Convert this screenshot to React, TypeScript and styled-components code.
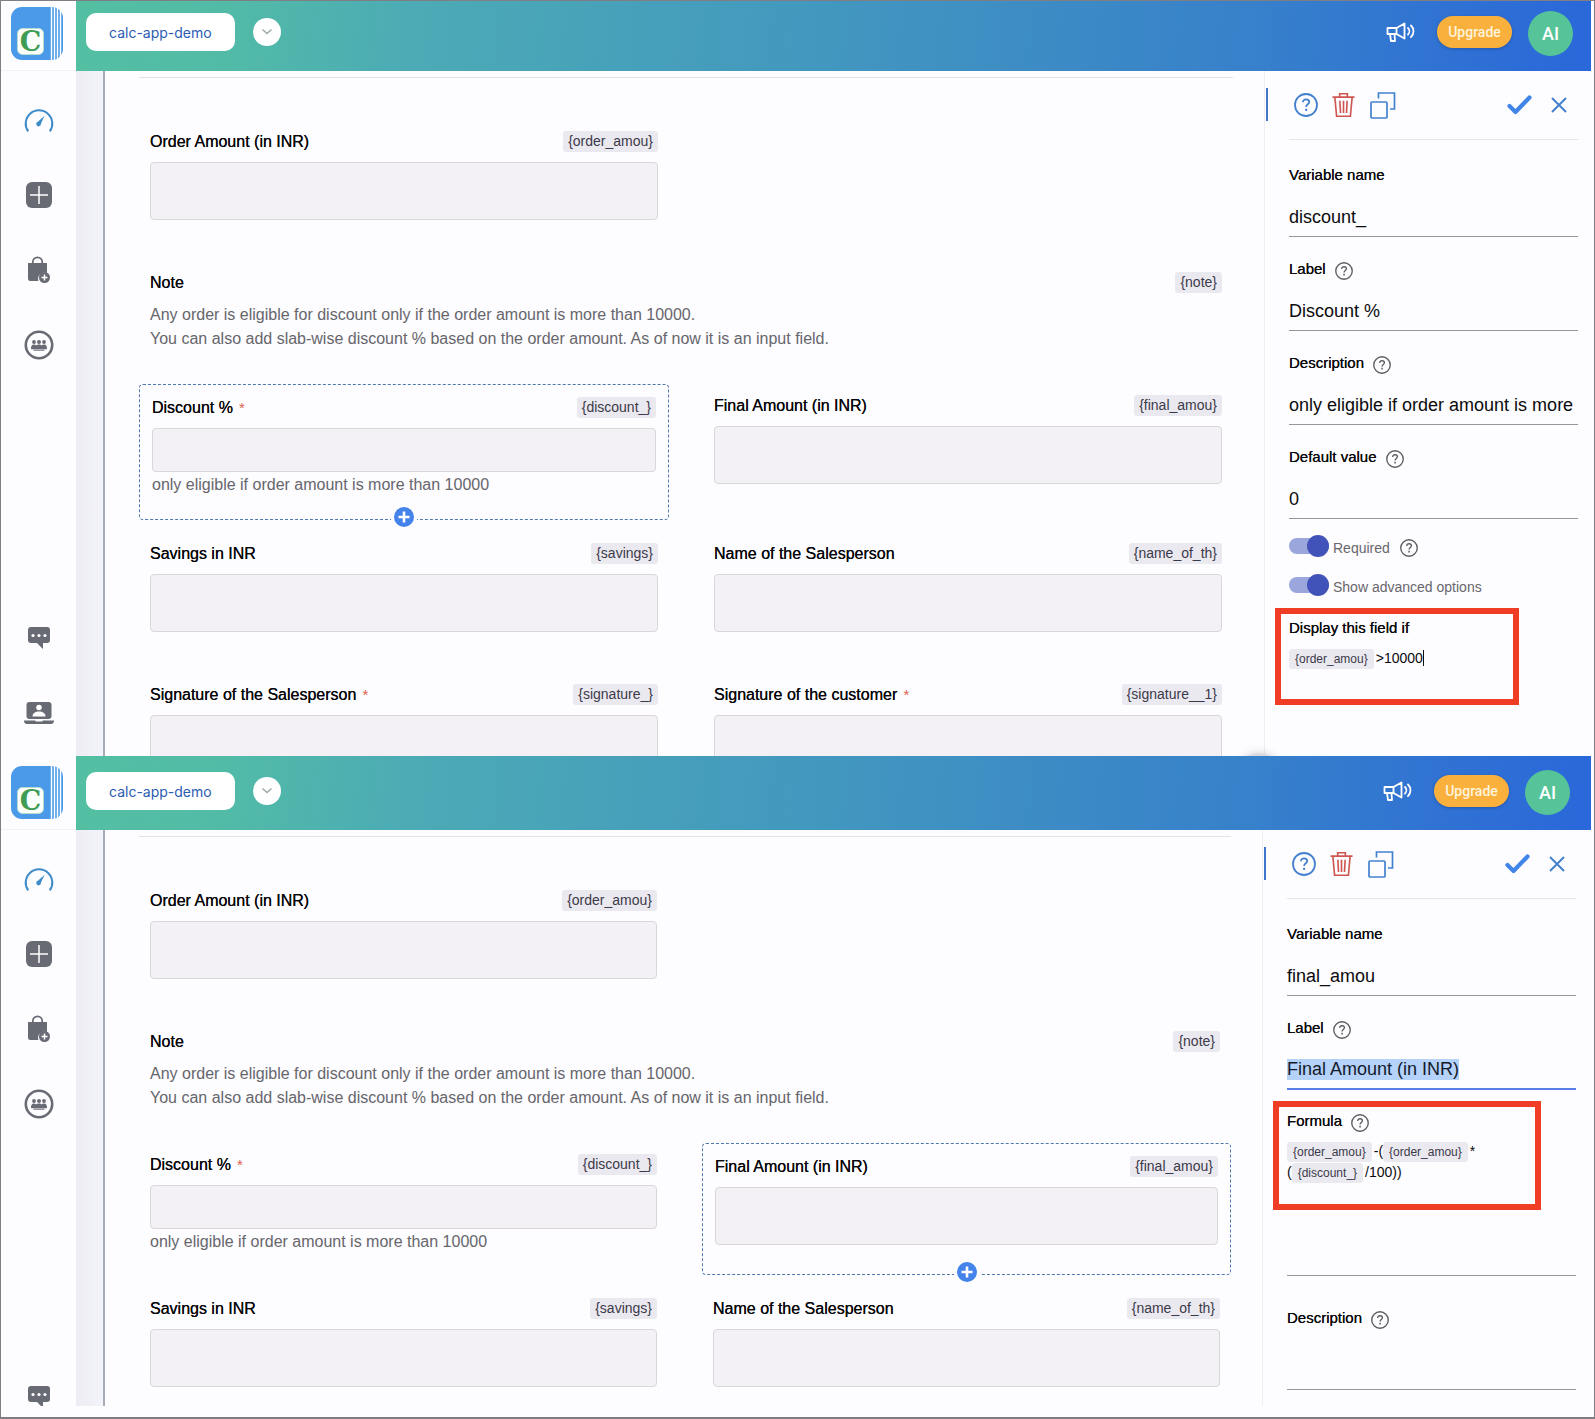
import React, { useEffect, useId, useRef } from "react";
import styled, { createGlobalStyle, css } from "styled-components";

const GlobalStyle = createGlobalStyle`
  *, *::before, *::after { box-sizing: border-box; }
  body {
    margin: 0;
    background: #fdfcfe;
    color: #0b0b0d;
    font-family: "Liberation Sans", Arial, sans-serif;
  }
  button, input, textarea { font: inherit; color: inherit; }
  button { border: 0; padding: 0; background: none; cursor: pointer; }
`;

/* ---------- page ---------- */

const Page = styled.div`
  display: flex;
  flex-direction: column;
  height: 100vh;
  padding: 0 3px 11px 0;
  border: 1px solid #807d83;
  border-bottom-width: 2px;
`;

const Frame = styled.section<{ $share: number }>`
  flex: ${(p) => p.$share} 1 0;
  min-height: 0;
  overflow: hidden;
  position: relative;
  display: grid;
  grid-template-columns: 75px minmax(0, 1fr);
  grid-template-rows: auto minmax(0, 1fr);
`;

/* ---------- side bar ---------- */

const LogoSlot = styled.div`
  display: flex;
  justify-content: center;
  align-items: flex-end;
  padding: 0 4px 10px 0;
  border-bottom: 1px solid #f4f1f6;
`;

const Sidebar = styled.nav`
  display: flex;
  flex-direction: column;
  padding: 11px 0 0;
  overflow: hidden;
`;

const SideButton = styled.button<{ $active?: boolean }>`
  flex: none;
  display: grid;
  place-items: center;
  height: 75px;
  color: ${(p) => (p.$active ? "#3d8bc9" : "#686a74")};
`;

const SideGap = styled.div`
  flex: none;
  height: 218px;
`;

/* ---------- top bar ---------- */

const Header = styled.header<{ $height: number; $inset: number }>`
  display: flex;
  align-items: flex-end;
  height: ${(p) => p.$height}px;
  padding: 0 ${(p) => p.$inset}px 0 10px;
  background: linear-gradient(
    95deg,
    #53bfa2 0%,
    #52bba7 10%,
    #4cabb5 22%,
    #4297bf 50%,
    #3780cb 78%,
    #2a67da 100%
  );
`;

const AppName = styled.button`
  height: 38px;
  margin-bottom: 20px;
  padding: 0 23px;
  border-radius: 10px;
  background: #fff;
  color: #2b5cb3;
  font-family: Inter, sans-serif;
  font-size: 14px;
`;

const RoundButton = styled.button`
  display: grid;
  place-items: center;
  width: 28px;
  height: 28px;
  margin: 0 auto 25px 18px;
  border-radius: 50%;
  background: #fff;
  color: #9aa9a8;
`;

const NewsButton = styled.button`
  height: 20px;
  margin: 0 22px 29px 0;
  color: #fff;
`;

const Upgrade = styled.button`
  width: 75px;
  height: 32px;
  margin: 0 16px 23px 0;
  border-radius: 16px;
  background: #fab03d;
  box-shadow: 0 1px 3px rgba(20, 40, 90, 0.35);
  color: #fff4dc;
  font-family: Roboto, sans-serif;
  font-size: 14px;
  font-weight: 500;
`;

const Avatar = styled.button`
  width: 45px;
  height: 45px;
  margin-bottom: 15px;
  border-radius: 50%;
  background: #56c498;
  color: #fff;
  font-family: Roboto, sans-serif;
  font-size: 18px;
  font-weight: 500;
`;

/* ---------- form canvas ---------- */

const Body = styled.div`
  display: grid;
  grid-template-columns: 29px minmax(0, 1fr) auto;
  min-height: 0;
`;

const Gutter = styled.div`
  border-right: 2px solid #a6abb8;
  background: linear-gradient(90deg, #ededf3, #f3f4f9);
`;

const Canvas = styled.main`
  padding: 6px 31px 0 34px;
  overflow: hidden;
`;

const FormGrid = styled.div`
  display: grid;
  grid-template-columns: 1fr 1fr;
  gap: 12px 34px;
  padding-top: 42px;
  border-top: 1px solid #e4e1e7;
`;

const Cell = styled.div<{ $selected?: boolean; $compact?: boolean; $wide?: boolean }>`
  position: relative;
  border: 1px dashed transparent;
  border-radius: 4px;
  padding: 10px 10px ${(p) => (p.$compact ? 20 : 28)}px;
  ${(p) => p.$wide && css`grid-column: 1 / -1;`}
  ${(p) =>
    p.$selected &&
    css`
      border-color: #4f79ad;
      padding: 12px 12px ${p.$compact ? 22 : 28}px;
    `}
`;

const CellHead = styled.div`
  display: flex;
  justify-content: space-between;
  align-items: center;
  height: 21px;
  margin-bottom: 10px;
`;

const CellLabel = styled.label`
  font-size: 16px;
  line-height: 21px;
  color: #08080a;
  text-shadow: 0 0 0 #08080a;
`;

const Star = styled.span`
  margin-left: 2px;
  color: #dc5f4d;
  font-size: 15px;
  text-shadow: none;
`;

const Tag = styled.code`
  padding: 0 5px;
  border-radius: 3px;
  background: #ebe9f0;
  color: #3b3a4a;
  font-family: "Liberation Sans", Arial, sans-serif;
  font-size: 14px;
  line-height: 21px;
`;

const CellInput = styled.input<{ $short?: boolean }>`
  display: block;
  width: 100%;
  height: ${(p) => (p.$short ? 44 : 58)}px;
  border: 1px solid #d9d7dc;
  border-radius: 4px;
  background: #f4f1f6;
`;

const CellText = styled.p`
  margin: 0;
  color: #66666c;
  font-size: 16px;
  line-height: 24px;
`;

const Hint = styled(CellText)`
  margin-top: 1px;
`;

const AddButton = styled.button`
  position: absolute;
  left: 50%;
  bottom: -8px;
  display: grid;
  place-items: center;
  width: 26px;
  height: 20px;
  margin-left: -13px;
  background: #fdfcfe;
`;

const FloatingButton = styled.button`
  position: absolute;
  right: 312px;
  bottom: -37px;
  width: 40px;
  height: 40px;
  border-radius: 50%;
  background: #dcdade;
  box-shadow: 0 0 8px rgba(90, 70, 90, 0.25);
`;

/* ---------- settings panel ---------- */

const Panel = styled.aside<{ $inset: number }>`
  position: relative;
  width: ${(p) => 314 + p.$inset}px;
  padding: 0 ${(p) => p.$inset}px 0 24px;
  border-left: 1px solid #f0edf3;
`;

const Handle = styled.div`
  position: absolute;
  left: 1px;
  top: 17px;
  width: 2px;
  height: 33px;
  background: #3f76c8;
`;

const Toolbar = styled.div`
  display: flex;
  align-items: center;
  height: 69px;
  padding: 0 11px 0 5px;
  border-bottom: 1px solid #e6e3e9;
  color: #4381cf;
`;

const ToolButton = styled.button<{ $danger?: boolean; $push?: boolean }>`
  display: grid;
  margin-right: 14px;
  color: ${(p) => (p.$danger ? "#cf5650" : "inherit")};
  ${(p) => p.$push && css`margin-left: auto; margin-right: 19px;`}
  &:last-child { margin-right: 0; }
`;

const PanelBody = styled.div`
  padding-top: 3px;
`;

const Group = styled.div<{ $spaced?: boolean }>`
  padding-top: ${(p) => (p.$spaced ? 32 : 22)}px;
`;

const LabelRow = styled.div`
  display: flex;
  align-items: center;
  gap: 9px;
  height: 20px;
  margin-bottom: 10px;
`;

const labelText = css`
  color: #0b0b0d;
  font-size: 15px;
  line-height: 20px;
  text-shadow: 0 0 0 #0b0b0d;
`;

const PanelLabel = styled.label`
  ${labelText}
`;

const EditorLabel = styled.span`
  ${labelText}
`;

const HelpButton = styled.button`
  display: grid;
  margin-top: 4px;
  color: #5c5c62;
`;

const underline = css`
  display: block;
  width: 100%;
  padding: 3px 0 0;
  border: 0;
  border-bottom: 1px solid #97959b;
  border-radius: 0;
  outline: 0;
  background: none;
  font-size: 18px;
`;

const LineInput = styled.input`
  ${underline}
  height: 42px;
  &::selection { background: #b5d2fb; color: #141a2a; }
  &:focus { border-bottom: 2px solid #5680e6; }
`;

const LineArea = styled.textarea`
  ${underline}
  height: 52px;
  resize: none;
`;

const Toggles = styled.div`
  padding-top: 7px;
`;

const ToggleRow = styled.div`
  display: flex;
  align-items: center;
  height: 39px;
`;

const Switch = styled.input`
  appearance: none;
  display: grid;
  align-items: center;
  justify-items: end;
  width: 40px;
  height: 16px;
  margin: 0 4px 0 0;
  border-radius: 8px;
  background: #9ba6dd;
  &::before {
    content: "";
    width: 22px;
    height: 22px;
    margin: -3px 0;
    border-radius: 50%;
    background: #4152b8;
  }
`;

const SwitchLabel = styled.label`
  margin-right: 10px;
  padding-top: 5px;
  color: #67676d;
  font-size: 14px;
`;

const Callout = styled.div<{ $width: number; $height: number; $top: number }>`
  width: ${(p) => p.$width}px;
  min-height: ${(p) => p.$height}px;
  margin: ${(p) => p.$top}px 0 0 -14px;
  padding: 4px 8px;
  border: 6px solid #f03e26;
`;

const Editor = styled.div`
  font-size: 14px;
  line-height: 21px;
  outline: 0;
`;

const Token = styled.code`
  display: inline-block;
  padding: 0 6px;
  margin-right: 2px;
  border-radius: 3px;
  background: #ebe9f0;
  color: #3b3a4a;
  font-family: "Liberation Sans", Arial, sans-serif;
  font-size: 12px;
  line-height: 20px;
`;

const Caret = styled.span`
  border-left: 1px solid #111;
`;

const EditorLine = styled.div`
  height: 66px;
  border-bottom: 1px solid #97959b;
`;

/* ---------- icons ---------- */

const Logo = () => (
  <svg width="52" height="53" viewBox="0 0 52 53" aria-label="Clappia">
    <rect width="52" height="53" rx="11" fill="#4a9ae9" />
    <path d="M40.500 0v53M43.500 0v53M46.500 0v53M49.500 2v49" stroke="#fff" strokeWidth="1.400" />
    <rect x="6.500" y="21.500" width="26" height="26" rx="5" fill="#fbfffb" stroke="#b9dcd0" />
    <text x="19.500" y="44" textAnchor="middle" fontFamily="DejaVu Serif" fontWeight="700" fontSize="27" fill="#3f9c55">
      C
    </text>
  </svg>
);

const GaugeIcon = () => (
  <svg width="30" height="26" viewBox="0 0 30 26" fill="none">
    <path d="M4.2 24.4A13.3 13.3 0 1 1 25.8 24.4" stroke="currentColor" strokeWidth="2" />
    <path d="M20.600 8.800l-3.600 7.800a2.400 2.400 0 1 1-2.800-2z" fill="currentColor" />
  </svg>
);

const PlusSquareIcon = () => (
  <svg width="26" height="26" viewBox="0 0 26 26">
    <rect width="26" height="26" rx="6" fill="currentColor" />
    <path d="M13 4v18M4 13h18" stroke="#fff" strokeWidth="1.5" />
  </svg>
);

const BagIcon = () => (
  <svg width="24" height="28" viewBox="0 0 24 28">
    <path d="M1 7h19v10a6.500 6.500 0 0 0-8.600 8H3.500A2.500 2.500 0 0 1 1 22.500z" fill="currentColor" />
    <path d="M5.800 8V6a4.700 4.700 0 0 1 9.400 0v2" fill="none" stroke="currentColor" strokeWidth="1.700" />
    <circle cx="17.500" cy="21.500" r="5.500" fill="currentColor" />
    <path d="M17.500 18.500v6M14.500 21.500h6" stroke="#fff" strokeWidth="1.500" />
  </svg>
);

const TeamIcon = () => (
  <svg width="30" height="30" viewBox="0 0 30 30">
    <circle cx="15" cy="15" r="13.200" fill="none" stroke="currentColor" strokeWidth="2.600" />
    <g fill="currentColor">
      <circle cx="10" cy="12" r="1.900" />
      <circle cx="15" cy="12" r="2" />
      <circle cx="20" cy="12" r="1.900" />
      <path d="M7 18.500c0-3.500 2-4 3-4s1.800.3 2.300 1c.7-.8 1.600-1 2.700-1s2 .2 2.700 1c.5-.7 1.300-1 2.300-1s3 .5 3 4c0 .5-.3.700-.7.700H7.700c-.4 0-.7-.2-.7-.700z" />
      <path d="M9.500 20.200h11" stroke="currentColor" strokeWidth="1" />
    </g>
  </svg>
);

const ChatIcon = () => (
  <svg width="24" height="24" viewBox="0 0 24 24">
    <path d="M4 1h16a3 3 0 0 1 3 3v10a3 3 0 0 1-3 3h-4v6l-6-6H4a3 3 0 0 1-3-3V4a3 3 0 0 1 3-3z" fill="currentColor" />
    <g fill="#fff">
      <circle cx="6" cy="9.500" r="1.600" />
      <circle cx="12" cy="9.500" r="1.600" />
      <circle cx="18" cy="9.500" r="1.600" />
    </g>
  </svg>
);

const LaptopIcon = () => (
  <svg width="30" height="24" viewBox="0 0 30 24">
    <rect x="2.500" y="1" width="25" height="17" rx="3" fill="currentColor" />
    <circle cx="15" cy="6.500" r="2.800" fill="#fff" />
    <path d="M8.500 15.500c0-3.500 3-5 6.500-5s6.500 1.500 6.500 5z" fill="#fff" />
    <path d="M0 19.500h11l1 1h6l1-1h11c0 2-1 3.500-3 3.500H3c-2 0-3-1.500-3-3.500z" fill="currentColor" />
  </svg>
);

const ChevronIcon = () => (
  <svg width="12" height="8" viewBox="0 0 12 8" fill="none" stroke="currentColor" strokeWidth="1.500">
    <path d="M1.500 1.500L6 5.500l4.500-4" />
  </svg>
);

const MegaphoneIcon = () => (
  <svg width="29" height="20" viewBox="0 0 29 20" fill="none" stroke="currentColor" strokeWidth="1.800" strokeLinejoin="round" strokeLinecap="round">
    <path d="M1.500 6h9l8-4.500v15l-8-4.500h-9z" />
    <path d="M10.500 6v6M4 12l1 7h4l-.5-7M22 6c1.800 1.800 1.800 4.700 0 6.500M25 3.500c3.300 3.200 3.300 8.300 0 11.500" />
  </svg>
);

const QuestionIcon = ({ size }: { size: number }) => (
  <svg width={size} height={size} viewBox="0 0 24 24" fill="none" stroke="currentColor" strokeWidth="1.800">
    <circle cx="12" cy="12" r="11" />
    <path d="M8.900 9.300c0-1.900 1.400-3 3.200-3s3.100 1.100 3.100 2.700c0 2.200-3.100 2.400-3.100 4.900" />
    <path d="M12.100 15.800v2.100" strokeWidth="2" />
  </svg>
);

const TrashIcon = () => (
  <svg width="23" height="26" viewBox="0 0 24 26" fill="none" stroke="currentColor" strokeWidth="1.700">
    <path d="M.5 4.800h23M8 4.500V1.300h8v3.200M3 5l1.800 19.800h14.400L21 5M8.200 8.500l.7 12.800M12 8.500v12.800M15.800 8.500l-.7 12.800" />
  </svg>
);

const CopyIcon = () => (
  <svg width="27" height="27" viewBox="0 0 27 27" fill="none" stroke="currentColor" strokeWidth="1.700">
    <rect x="2" y="10" width="16" height="16" rx="1" />
    <path d="M9.500 6.500V1h16v16h-4.500" />
  </svg>
);

const CheckIcon = () => (
  <svg width="25" height="20" viewBox="0 0 25 20" fill="none" stroke="#4285e8" strokeWidth="4.200" strokeLinecap="round" strokeLinejoin="round">
    <path d="M2.500 11l6 6L22.500 2.500" />
  </svg>
);

const CloseIcon = () => (
  <svg width="16" height="16" viewBox="0 0 16 16" fill="none" stroke="currentColor" strokeWidth="2">
    <path d="M1 1l14 14M15 1L1 15" />
  </svg>
);

const AddIcon = () => (
  <svg width="20" height="20" viewBox="0 0 20 20">
    <circle cx="10" cy="10" r="10" fill="#4383ea" />
    <path d="M10 4.500v11M4.500 10h11" stroke="#fff" strokeWidth="2.600" />
  </svg>
);

/* ---------- form canvas parts ---------- */

type FormItem = {
  label: string;
  tag: string;
  required?: boolean;
  text?: string[];
  hint?: string;
};

const formItems: FormItem[] = [
  { label: "Order Amount (in INR)", tag: "{order_amou}" },
  {
    label: "Note",
    tag: "{note}",
    text: [
      "Any order is eligible for discount only if the order amount is more than 10000.",
      "You can also add slab-wise discount % based on the order amount. As of now it is an input field.",
    ],
  },
  {
    label: "Discount %",
    tag: "{discount_}",
    required: true,
    hint: "only eligible if order amount is more than 10000",
  },
  { label: "Final Amount (in INR)", tag: "{final_amou}" },
  { label: "Savings in INR", tag: "{savings}" },
  { label: "Name of the Salesperson", tag: "{name_of_th}" },
  { label: "Signature of the Salesperson", tag: "{signature_}", required: true },
  { label: "Signature of the customer", tag: "{signature__1}", required: true },
];

function FormCell({ item, selected }: { item: FormItem; selected: boolean }) {
  const id = useId();
  return (
    <Cell $selected={selected} $compact={!!(item.text || item.hint)} $wide={!!item.text}>
      <CellHead>
        <CellLabel as={item.text ? "span" : "label"} htmlFor={item.text ? undefined : id}>
          {item.label}
          {item.required && <Star> *</Star>}
        </CellLabel>
        <Tag>{item.tag}</Tag>
      </CellHead>
      {item.text ? (
        item.text.map((line) => <CellText key={line}>{line}</CellText>)
      ) : (
        <CellInput id={id} readOnly $short={!!item.hint} />
      )}
      {item.hint && <Hint>{item.hint}</Hint>}
      {selected && (
        <AddButton aria-label="Add field">
          <AddIcon />
        </AddButton>
      )}
    </Cell>
  );
}

const EmptyCell = styled.div``;

function FormCanvas({ selectedTag, count }: { selectedTag: string; count: number }) {
  return (
    <Canvas>
      <FormGrid>
        {formItems.slice(0, count).map((item, i) => (
          <React.Fragment key={item.tag}>
            <FormCell item={item} selected={item.tag === selectedTag} />
            {i === 0 && <EmptyCell />}
          </React.Fragment>
        ))}
      </FormGrid>
    </Canvas>
  );
}

/* ---------- settings panel parts ---------- */

const Help = () => (
  <HelpButton aria-label="Help">
    <QuestionIcon size={18} />
  </HelpButton>
);

function Field({
  label,
  value,
  help,
  focused,
  multiline,
}: {
  label: string;
  value: string;
  help?: boolean;
  focused?: boolean;
  multiline?: boolean;
}) {
  const id = useId();
  const ref = useRef<HTMLInputElement>(null);
  useEffect(() => {
    if (focused && ref.current) {
      ref.current.focus({ preventScroll: true });
      ref.current.select();
    }
  }, [focused]);
  return (
    <Group $spaced={multiline}>
      <LabelRow>
        <PanelLabel htmlFor={id}>{label}</PanelLabel>
        {help && <Help />}
      </LabelRow>
      {multiline ? (
        <LineArea id={id} defaultValue={value} />
      ) : (
        <LineInput id={id} ref={ref} defaultValue={value} />
      )}
    </Group>
  );
}

function Toggle({ label, help }: { label: string; help?: boolean }) {
  const id = useId();
  return (
    <ToggleRow>
      <Switch id={id} type="checkbox" defaultChecked />
      <SwitchLabel htmlFor={id}>{label}</SwitchLabel>
      {help && <Help />}
    </ToggleRow>
  );
}

function SettingsPanel({ inset, children }: { inset: number; children: React.ReactNode }) {
  return (
    <Panel $inset={inset}>
      <Handle />
      <Toolbar>
        <ToolButton aria-label="Help">
          <QuestionIcon size={24} />
        </ToolButton>
        <ToolButton $danger aria-label="Delete">
          <TrashIcon />
        </ToolButton>
        <ToolButton aria-label="Duplicate">
          <CopyIcon />
        </ToolButton>
        <ToolButton $push aria-label="Save">
          <CheckIcon />
        </ToolButton>
        <ToolButton aria-label="Close">
          <CloseIcon />
        </ToolButton>
      </Toolbar>
      <PanelBody>{children}</PanelBody>
    </Panel>
  );
}

/* ---------- application frame ---------- */

function AppFrame({
  share,
  headerHeight,
  headerInset,
  canvas,
  panel,
  floating,
}: {
  share: number;
  headerHeight: number;
  headerInset: number;
  canvas: React.ReactNode;
  panel: React.ReactNode;
  floating?: boolean;
}) {
  return (
    <Frame $share={share}>
      <LogoSlot>
        <Logo />
      </LogoSlot>
      <Header $height={headerHeight} $inset={headerInset}>
        <AppName>calc-app-demo</AppName>
        <RoundButton aria-label="Switch app">
          <ChevronIcon />
        </RoundButton>
        <NewsButton aria-label="Announcements">
          <MegaphoneIcon />
        </NewsButton>
        <Upgrade>Upgrade</Upgrade>
        <Avatar>AI</Avatar>
      </Header>
      <Sidebar>
        <SideButton $active aria-label="Dashboard"><GaugeIcon /></SideButton>
        <SideButton aria-label="New app"><PlusSquareIcon /></SideButton>
        <SideButton aria-label="Marketplace"><BagIcon /></SideButton>
        <SideButton aria-label="Team"><TeamIcon /></SideButton>
        <SideGap />
        <SideButton aria-label="Chat"><ChatIcon /></SideButton>
        <SideButton aria-label="Training"><LaptopIcon /></SideButton>
      </Sidebar>
      <Body>
        <Gutter />
        {canvas}
        {panel}
      </Body>
      {floating && <FloatingButton aria-label="Scroll" />}
    </Frame>
  );
}

export default function App() {
  return (
    <>
      <GlobalStyle />
      <Page>
        <AppFrame
          share={755}
          headerHeight={70}
          headerInset={18}
          floating
          canvas={<FormCanvas selectedTag="{discount_}" count={8} />}
          panel={
            <SettingsPanel inset={13}>
              <Field label="Variable name" value="discount_" />
              <Field label="Label" value="Discount %" help />
              <Field label="Description" value="only eligible if order amount is more than 10000" help />
              <Field label="Default value" value="0" help />
              <Toggles>
                <Toggle label="Required" help />
                <Toggle label="Show advanced options" />
              </Toggles>
              <Callout $width={244} $height={97} $top={4}>
                <LabelRow>
                  <EditorLabel id="display-if">Display this field if</EditorLabel>
                </LabelRow>
                <Editor role="textbox" aria-labelledby="display-if">
                  <Token>{"{order_amou}"}</Token>
                  {">10000"}
                  <Caret />
                </Editor>
              </Callout>
            </SettingsPanel>
          }
        />
        <AppFrame
          share={650}
          headerHeight={74}
          headerInset={21}
          canvas={<FormCanvas selectedTag="{final_amou}" count={6} />}
          panel={
            <SettingsPanel inset={15}>
              <Field label="Variable name" value="final_amou" />
              <Field label="Label" value="Final Amount (in INR)" help focused />
              <Callout $width={268} $height={109} $top={11}>
                <LabelRow>
                  <EditorLabel id="formula">Formula</EditorLabel>
                  <Help />
                </LabelRow>
                <Editor role="textbox" aria-labelledby="formula">
                  <Token>{"{order_amou}"}</Token>
                  {"-("}
                  <Token>{"{order_amou}"}</Token>
                  {"*"}
                  <br />
                  {"("}
                  <Token>{"{discount_}"}</Token>
                  {"/100))"}
                </Editor>
              </Callout>
              <EditorLine />
              <Field label="Description" value="" help multiline />
            </SettingsPanel>
          }
        />
      </Page>
    </>
  );
}
